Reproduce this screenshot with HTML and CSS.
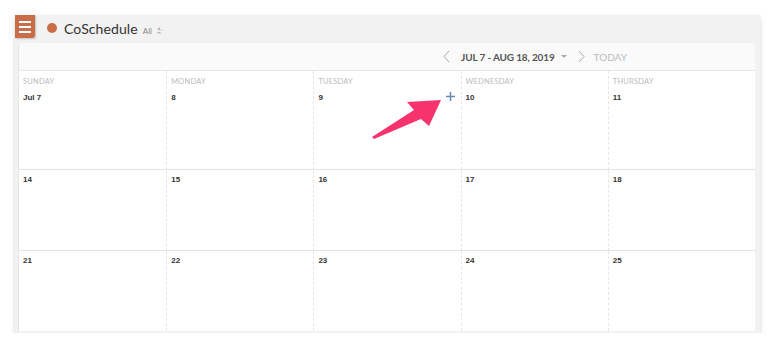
FILE: index.html
```html
<!DOCTYPE html>
<html lang="en">
<head>
    <meta charset="UTF-8">
    <meta name="viewport" content="width=device-width, initial-scale=1.0">
    <title>CoSchedule Calendar</title>
    <link rel="stylesheet" href="styles.css">
</head>
<body>
    <div class="cs-app">
        <div class="cs-topbar">
            <button class="cs-menu">
                <span></span><span></span><span></span>
            </button>
            <span class="cs-dot"></span>
            <span class="cs-brand">CoSchedule</span>
            <span class="cs-filter">All</span>
            <svg class="cs-user" width="7" height="7" viewBox="0 0 7 7">
                <circle cx="3" cy="2" r="1.4" fill="#bbb"/>
                <path d="M0.5 6.5 C0.8 4.4 5.2 4.4 5.5 6.5 Z" fill="#bbb"/>
                <path d="M5 3.5 L6.6 3.5" stroke="#bbb" stroke-width="0.8"/>
            </svg>
        </div>

        <div class="cs-panel">
            <div class="cs-nav">
                <svg class="cs-chevron" width="7" height="13" viewBox="0 0 7 13">
                    <path d="M6 1 L1 6.5 L6 12" fill="none" stroke="#aaa" stroke-width="1"/>
                </svg>
                <span class="cs-range">JUL 7 - AUG 18, 2019</span>
                <span class="cs-caret"></span>
                <svg class="cs-chevron" width="7" height="13" viewBox="0 0 7 13">
                    <path d="M1 1 L6 6.5 L1 12" fill="none" stroke="#aaa" stroke-width="1"/>
                </svg>
                <span class="cs-today">TODAY</span>
            </div>

            <div class="cs-grid">
                <div class="cs-day"><div class="cs-weekday">SUNDAY</div><div class="cs-date">Jul 7</div></div>
                <div class="cs-day"><div class="cs-weekday">MONDAY</div><div class="cs-date">8</div></div>
                <div class="cs-day">
                    <div class="cs-weekday">TUESDAY</div><div class="cs-date">9</div>
                    <svg class="cs-add" width="9" height="9" viewBox="0 0 9 9">
                        <path d="M4.5 0 V9 M0 4.5 H9" stroke="#6a8bb0" stroke-width="1.5"/>
                    </svg>
                </div>
                <div class="cs-day"><div class="cs-weekday">WEDNESDAY</div><div class="cs-date">10</div></div>
                <div class="cs-day"><div class="cs-weekday">THURSDAY</div><div class="cs-date">11</div></div>

                <div class="cs-day"><div class="cs-date">14</div></div>
                <div class="cs-day"><div class="cs-date">15</div></div>
                <div class="cs-day"><div class="cs-date">16</div></div>
                <div class="cs-day"><div class="cs-date">17</div></div>
                <div class="cs-day"><div class="cs-date">18</div></div>

                <div class="cs-day"><div class="cs-date">21</div></div>
                <div class="cs-day"><div class="cs-date">22</div></div>
                <div class="cs-day"><div class="cs-date">23</div></div>
                <div class="cs-day"><div class="cs-date">24</div></div>
                <div class="cs-day"><div class="cs-date">25</div></div>
            </div>
        </div>
    </div>

    <!-- callout arrow pointing at the add button -->
    <svg class="cs-pointer" width="770" height="359" viewBox="0 0 770 359">
        <polygon points="372,137 414,110 407,102 441,100 429,126 421,119 374,139" fill="#f7336d"/>
    </svg>
</body>
</html>
```

FILE: styles.css
```css
* {
    margin: 0;
    padding: 0;
    box-sizing: border-box;
}

body {
    background: #fff;
    font-family: Lato, "Open Sans", sans-serif;
    padding: 15px 10px 0 15px;
    position: relative;
}

.cs-app {
    width: 745px;
    height: 318px;
    background: #f2f2f2;
    display: flex;
    flex-direction: column;
    box-shadow: 0 2px 3px rgba(0,0,0,0.12), 0 3px 8px rgba(0,0,0,0.08);
}

.cs-topbar {
    height: 28px;
    display: flex;
    align-items: flex-start;
}

.cs-menu {
    width: 20px;
    height: 23px;
    background: #c96d48;
    border: none;
    border-radius: 0 0 3px 0;
    display: flex;
    flex-direction: column;
    align-items: center;
    justify-content: center;
    gap: 3px;
    box-shadow: 1px 1px 2px rgba(0,0,0,0.2);
}

.cs-menu span {
    display: block;
    width: 12px;
    height: 2px;
    background: #fff;
}

.cs-dot {
    width: 10px;
    height: 10px;
    border-radius: 50%;
    background: #c96d48;
    margin: 8px 0 0 12px;
}

.cs-brand {
    font-size: 14px;
    color: #333;
    margin: 5px 0 0 7px;
    letter-spacing: 0.1px;
}

.cs-filter {
    font-size: 8px;
    color: #888;
    margin: 11px 0 0 5px;
}

.cs-user {
    margin: 12px 0 0 4px;
}

.cs-panel {
    flex: 1;
    margin: 0 5px 2px 4px;
    background: #fff;
    border-radius: 4px 0 0 0;
    display: flex;
    flex-direction: column;
    box-shadow: -1px 0 1px rgba(0,0,0,0.06);
}

.cs-nav {
    height: 28px;
    background: #fafafa;
    border-bottom: 1px solid #e8e8e8;
    border-radius: 4px 0 0 0;
    display: flex;
    align-items: center;
    padding-left: 424px;
}

.cs-chevron {
    display: block;
}

.cs-range {
    font-size: 10px;
    font-weight: bold;
    color: #555;
    margin-left: 11px;
    letter-spacing: -0.15px;
}

.cs-caret {
    width: 0;
    height: 0;
    border-left: 3px solid transparent;
    border-right: 3px solid transparent;
    border-top: 3px solid #aaa;
    margin: 0 11px 0 6px;
}

.cs-today {
    font-size: 10px;
    color: #bbb;
    margin-left: 9px;
}

.cs-grid {
    flex: 1;
    display: grid;
    grid-template-columns: repeat(5, 1fr);
    grid-template-rows: 99px 81px 1fr;
}

.cs-day {
    position: relative;
    border-left: 1px dashed #e6e6e6;
    border-bottom: 1px solid #e3e3e3;
    padding: 6px 4px 0 4px;
}

.cs-day:nth-child(5n+1) {
    border-left: none;
}

.cs-day:nth-child(n+6) {
    padding-top: 5px;
}

.cs-day:nth-child(n+11) {
    border-bottom: none;
}

.cs-weekday {
    font-size: 7.5px;
    color: #bbb;
    margin-bottom: 7px;
    letter-spacing: 0.2px;
}

.cs-date {
    font-family: "Liberation Sans", Arial, sans-serif;
    font-size: 8px;
    font-weight: bold;
    color: #333;
}

.cs-add {
    position: absolute;
    right: 6px;
    top: 21px;
}

.cs-pointer {
    position: absolute;
    left: 0;
    top: 0;
    pointer-events: none;
}
```
